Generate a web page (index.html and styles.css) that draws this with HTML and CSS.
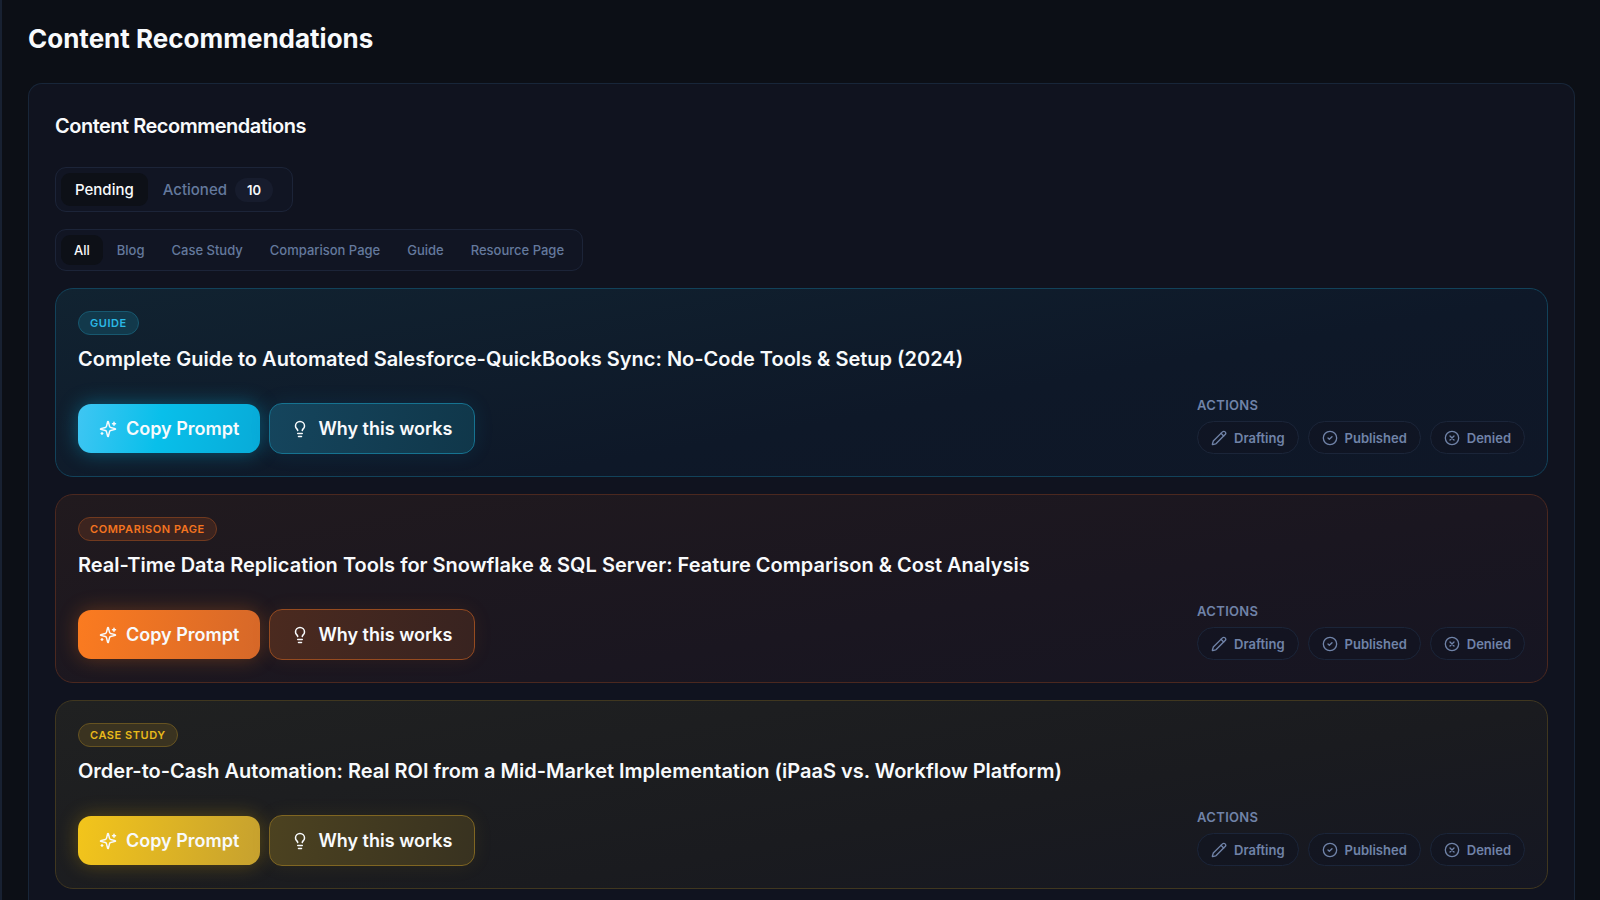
FILE: index.html
```html
<!DOCTYPE html>
<html lang="en">
<head>
    <meta charset="UTF-8">
    <meta name="viewport" content="width=device-width, initial-scale=1.0">
    <title>Content Recommendations</title>
    <link rel="stylesheet" href="styles.css">
</head>
<body>

    <!-- shared icons -->
    <svg class="sprite" aria-hidden="true">
        <symbol id="icon-sparkles" viewBox="0 0 24 24">
            <path d="M9.937 15.500A2 2 0 0 0 8.500 14.063l-6.135-1.582a.5.5 0 0 1 0-.962L8.500 9.936A2 2 0 0 0 9.937 8.500l1.582-6.135a.5.5 0 0 1 .963 0L14.063 8.500A2 2 0 0 0 15.500 9.937l6.135 1.581a.5.5 0 0 1 0 .964L15.500 14.063a2 2 0 0 0-1.437 1.437l-1.582 6.135a.5.5 0 0 1-.963 0z"/>
            <path d="M20 3v4M22 5h-4M4 17v2M5 18H3"/>
        </symbol>
        <symbol id="icon-bulb" viewBox="0 0 24 24">
            <path d="M15 14c.2-1 .7-1.700 1.500-2.500 1-.9 1.500-2.200 1.500-3.500A6 6 0 0 0 6 8c0 1 .2 2.200 1.500 3.500.7.7 1.300 1.500 1.500 2.500"/>
            <path d="M9 18h6M10 22h4"/>
        </symbol>
        <symbol id="icon-pencil" viewBox="0 0 24 24">
            <path d="M21.200 6.800a1 1 0 0 0-4-4L3.800 16.200a2 2 0 0 0-.5.8L2 21.400a.5.5 0 0 0 .6.600l4.400-1.300a2 2 0 0 0 .8-.5z"/>
            <path d="m15 5 4 4"/>
        </symbol>
        <symbol id="icon-check" viewBox="0 0 24 24">
            <circle cx="12" cy="12" r="10"/>
            <path d="m9 12 2 2 4-4"/>
        </symbol>
        <symbol id="icon-deny" viewBox="0 0 24 24">
            <circle cx="12" cy="12" r="10"/>
            <path d="m15 9-6 6M9 9l6 6"/>
        </symbol>
    </svg>

    <main class="page">
        <h1>Content Recommendations</h1>

        <section class="panel">
            <h2>Content Recommendations</h2>

            <div class="tabs status">
                <button class="tab active" type="button">Pending</button>
                <button class="tab" type="button">Actioned <span class="count">10</span></button>
            </div>

            <div class="tabs filters">
                <button class="tab active" type="button">All</button>
                <button class="tab" type="button">Blog</button>
                <button class="tab" type="button">Case Study</button>
                <button class="tab" type="button">Comparison Page</button>
                <button class="tab" type="button">Guide</button>
                <button class="tab" type="button">Resource Page</button>
            </div>

            <div class="cards">
                <article class="card guide">
                    <span class="badge">Guide</span>
                    <h3>Complete Guide to Automated Salesforce-QuickBooks Sync: No-Code Tools &amp; Setup (2024)</h3>
                    <div class="card-footer">
                        <div class="buttons">
                            <button class="btn copy" type="button"><svg class="icon"><use href="#icon-sparkles"/></svg>Copy Prompt</button>
                            <button class="btn why" type="button"><svg class="icon"><use href="#icon-bulb"/></svg>Why this works</button>
                        </div>
                        <div class="actions">
                            <div class="actions-label">Actions</div>
                            <div class="pills">
                                <button class="pill" type="button"><svg class="icon"><use href="#icon-pencil"/></svg>Drafting</button>
                                <button class="pill" type="button"><svg class="icon"><use href="#icon-check"/></svg>Published</button>
                                <button class="pill" type="button"><svg class="icon"><use href="#icon-deny"/></svg>Denied</button>
                            </div>
                        </div>
                    </div>
                </article>

                <article class="card comparison">
                    <span class="badge">Comparison Page</span>
                    <h3>Real-Time Data Replication Tools for Snowflake &amp; SQL Server: Feature Comparison &amp; Cost Analysis</h3>
                    <div class="card-footer">
                        <div class="buttons">
                            <button class="btn copy" type="button"><svg class="icon"><use href="#icon-sparkles"/></svg>Copy Prompt</button>
                            <button class="btn why" type="button"><svg class="icon"><use href="#icon-bulb"/></svg>Why this works</button>
                        </div>
                        <div class="actions">
                            <div class="actions-label">Actions</div>
                            <div class="pills">
                                <button class="pill" type="button"><svg class="icon"><use href="#icon-pencil"/></svg>Drafting</button>
                                <button class="pill" type="button"><svg class="icon"><use href="#icon-check"/></svg>Published</button>
                                <button class="pill" type="button"><svg class="icon"><use href="#icon-deny"/></svg>Denied</button>
                            </div>
                        </div>
                    </div>
                </article>

                <article class="card case-study">
                    <span class="badge">Case Study</span>
                    <h3>Order-to-Cash Automation: Real ROI from a Mid-Market Implementation (iPaaS vs. Workflow Platform)</h3>
                    <div class="card-footer">
                        <div class="buttons">
                            <button class="btn copy" type="button"><svg class="icon"><use href="#icon-sparkles"/></svg>Copy Prompt</button>
                            <button class="btn why" type="button"><svg class="icon"><use href="#icon-bulb"/></svg>Why this works</button>
                        </div>
                        <div class="actions">
                            <div class="actions-label">Actions</div>
                            <div class="pills">
                                <button class="pill" type="button"><svg class="icon"><use href="#icon-pencil"/></svg>Drafting</button>
                                <button class="pill" type="button"><svg class="icon"><use href="#icon-check"/></svg>Published</button>
                                <button class="pill" type="button"><svg class="icon"><use href="#icon-deny"/></svg>Denied</button>
                            </div>
                        </div>
                    </div>
                </article>
            </div>
        </section>
    </main>

</body>
</html>
```
FILE: styles.css
```css
* {
    box-sizing: border-box;
}

body {
    margin: 0;
    background-color: #0c0f16;
    color: #f8fafc;
    font-family: Inter, sans-serif;
    font-optical-sizing: none;
}

h1, h2, h3 {
    margin: 0;
}

button {
    border: none;
    margin: 0;
    font-family: inherit;
    color: inherit;
    cursor: pointer;
}

.sprite {
    display: none;
}

.icon {
    flex: none;
    fill: none;
    stroke: currentColor;
    stroke-width: 2;
    stroke-linecap: round;
    stroke-linejoin: round;
}

.page {
    min-height: 100vh;
    padding: 22px 25px 0 26px;
    border-left: 2px solid #182132;
}

h1 {
    margin-bottom: 27px;
    font-size: 26px;
    line-height: 34px;
    font-weight: 700;
}

.panel {
    padding: 26px 26px 0;
    border: 1px solid #182639;
    border-bottom: none;
    border-radius: 14px 14px 0 0;
    background-color: #10131f;
}

h2 {
    margin-bottom: 25px;
    font-size: 20px;
    line-height: 32px;
    font-weight: 600;
    letter-spacing: -0.025em;
}

/* Tabs */
.tabs {
    display: flex;
    width: fit-content;
    gap: 1px;
    padding: 5px;
    margin-bottom: 17px;
    border: 1px solid #1c2438;
    border-radius: 11px;
    background-color: #111523;
}

.tab {
    display: flex;
    align-items: center;
    gap: 8px;
    height: 30px;
    padding: 0 13px;
    border-radius: 9px;
    background: none;
    color: #64799d;
    font-size: 13px;
    font-weight: 500;
}

.tab.active {
    background-color: #0d1017;
    color: #f8fafc;
}

.status .tab {
    height: 33px;
    padding: 0 14px;
    font-size: 15px;
}

.count {
    padding: 0 12px;
    border-radius: 12px;
    background-color: #171c2d;
    color: #f8fafc;
    font-size: 13px;
    line-height: 24px;
    font-weight: 600;
}

/* Recommendation cards */
.cards {
    display: flex;
    flex-direction: column;
    gap: 17px;
    padding-bottom: 26px;
}

.card {
    padding: 22px;
    border: 1px solid;
    border-radius: 18px;
}

.badge {
    display: block;
    width: fit-content;
    margin-bottom: 10px;
    padding: 0 11px;
    border: 1px solid;
    border-radius: 12px;
    font-size: 11px;
    line-height: 22px;
    font-weight: 600;
    letter-spacing: 0.05em;
    text-transform: uppercase;
}

h3 {
    margin-bottom: 24px;
    font-size: 20px;
    line-height: 28px;
    font-weight: 600;
}

.card-footer {
    display: flex;
    justify-content: space-between;
    align-items: flex-end;
}

.buttons {
    display: flex;
    align-items: center;
    gap: 9px;
}

.btn {
    display: flex;
    align-items: center;
    gap: 9px;
    height: 49px;
    padding: 0 21px;
    border-radius: 13px;
    color: #f8fafc;
    font-size: 18px;
    font-weight: 600;
}

.btn .icon {
    width: 18px;
    height: 18px;
}

.btn.why {
    height: 51px;
    border: 1px solid;
}

.actions-label {
    margin-bottom: 8px;
    color: #7083a8;
    font-size: 13px;
    line-height: 16px;
    font-weight: 600;
    letter-spacing: 0.025em;
    text-transform: uppercase;
}

.pills {
    display: flex;
    gap: 9px;
}

.pill {
    display: flex;
    align-items: center;
    gap: 7px;
    height: 33px;
    padding: 0 13px;
    border: 1px solid #1b2539;
    border-radius: 17px;
    background-color: rgba(17, 20, 34, 0.6);
    color: #7083a8;
    font-size: 13px;
    font-weight: 600;
}

.pill .icon {
    width: 16px;
    height: 16px;
}

/* Colour themes */
.guide {
    border-color: #12425a;
    background: linear-gradient(170deg, #112331, #0e1828 60%, #0f1727);
}

.guide .badge {
    border-color: #17586f;
    background-color: #12394b;
    color: #2bb9e6;
}

.guide .copy {
    background: linear-gradient(100deg, #3fc6f3, #08bfea 45%, #08abd8);
    box-shadow: 0 0 20px rgba(8, 185, 230, 0.4);
}

.guide .why {
    border-color: #167391;
    background: linear-gradient(100deg, #15455d, #10374a);
    box-shadow: 0 0 20px rgba(8, 150, 210, 0.12);
}

.comparison {
    border-color: #4b281f;
    background: linear-gradient(170deg, #211a1e, #1a1620 60%, #161522);
}

.comparison .badge {
    border-color: #713a1f;
    background-color: #3c241f;
    color: #f4741f;
}

.comparison .copy {
    background: linear-gradient(100deg, #fb7b20, #d66829);
    box-shadow: 0 0 20px rgba(249, 115, 22, 0.3);
}

.comparison .why {
    border-color: #964b20;
    background: linear-gradient(100deg, #4b2a1f, #382320);
    box-shadow: 0 0 20px rgba(249, 115, 22, 0.08);
}

.case-study {
    border-color: #40371f;
    background: linear-gradient(170deg, #202121, #1a1b1f 60%, #151722);
}

.case-study .badge {
    border-color: #665321;
    background-color: #3a3320;
    color: #e9b91a;
}

.case-study .copy {
    background: linear-gradient(100deg, #f3c51b, #c6a12f);
    box-shadow: 0 0 20px rgba(234, 179, 8, 0.3);
}

.case-study .why {
    border-color: #806622;
    background: linear-gradient(100deg, #4c4220, #383220);
    box-shadow: 0 0 20px rgba(234, 179, 8, 0.08);
}
```
